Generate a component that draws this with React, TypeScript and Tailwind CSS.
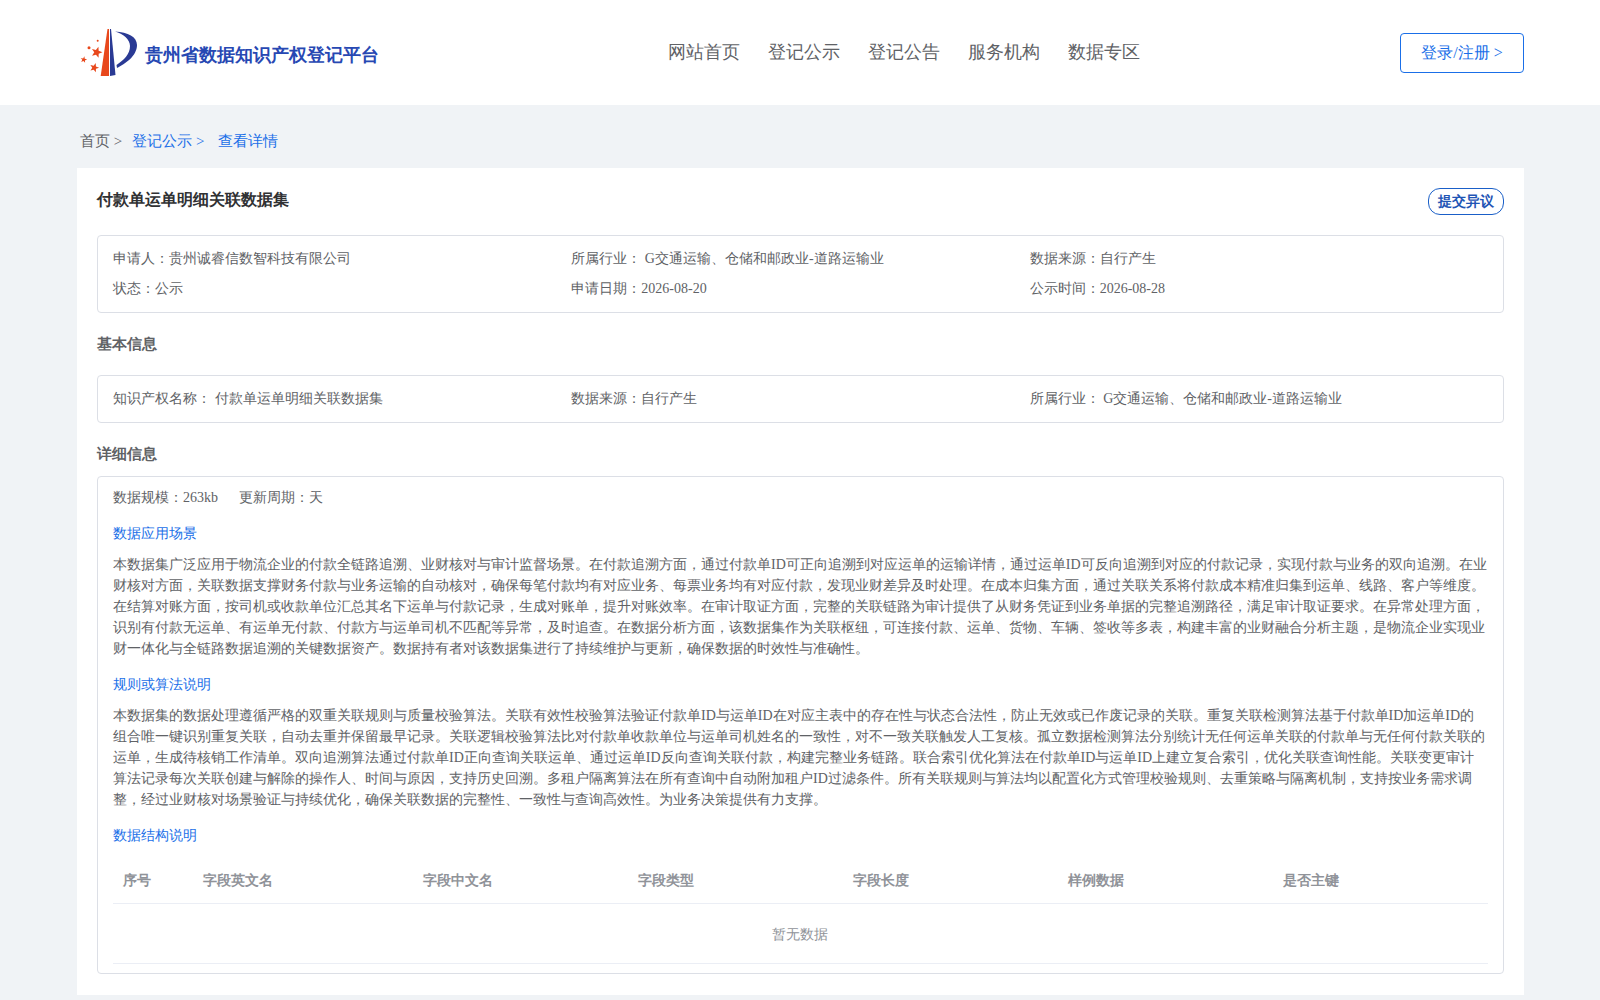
const navs = ["网站首页", "登记公示", "登记公告", "服务机构", "数据专区"];
const cols = ["序号", "字段英文名", "字段中文名", "字段类型", "字段长度", "样例数据", "是否主键"];

function star(cx: number, cy: number, r: number, rot = 0) {
  const pts: string[] = [];
  for (let i = 0; i < 10; i++) {
    const rad = i % 2 === 0 ? r : r * 0.42;
    const a = -Math.PI / 2 + (i * Math.PI) / 5 + rot;
    pts.push(`${(cx + rad * Math.cos(a)).toFixed(2)},${(cy + rad * Math.sin(a)).toFixed(2)}`);
  }
  return pts.join(" ");
}

function Logo() {
  return (
    <svg width="60" height="50" viewBox="0 0 60 50" className="shrink-0">
      <path d="M29.5 1 L31 1 L31 48 L22.7 48 Z" fill="#e8481c" />
      <path d="M32 1 L33 1 L37.5 47 L32 48 Z" fill="#2a3a94" />
      <path d="M37 3.5 C50 4 59 9 59 17 C59 28 47 36 39 40 L38.5 37 C46 32 52 26 52 18 C52 11 45 6 37 3.5 Z" fill="#2a3a94" />
      <polygon points={star(18.7, 24.3, 5.8, 0.3)} fill="#e8481c" />
      <polygon points={star(5.7, 31.7, 3.4, 0.2)} fill="#e8481c" />
      <polygon points={star(16.3, 39.7, 4.8, 0.3)} fill="#e8481c" />
      <circle cx="11" cy="19.7" r="1.5" fill="#e8481c" />
      <circle cx="19.7" cy="12.7" r="1" fill="#e8481c" />
    </svg>
  );
}

function Para({ children }: { children: React.ReactNode }) {
  return <p className="text-[14px] leading-[21px] text-[#606266]">{children}</p>;
}

export default function App() {
  return (
    <div className="min-h-[1000px] bg-[#f0f3f6] font-['Liberation_Serif',serif] text-[14px] text-[#606266]">
      <header className="flex h-[105px] items-center justify-between bg-white pl-[78px] pr-[76px]">
        <div className="flex w-[329px] items-center gap-[7px]">
          <Logo />
          <span className="mt-[6px] text-[18px] font-bold text-[#2748b3]">贵州省数据知识产权登记平台</span>
        </div>
        <nav className="flex gap-[28px] text-[18px] text-[#606266]">
          {navs.map((n) => (
            <span key={n}>{n}</span>
          ))}
        </nav>
        <button className="h-[40px] w-[124px] rounded-[4px] border border-[#1a6fe8] bg-white pt-[1px] text-[16px] text-[#1a6fe8]">
          登录/注册 &gt;
        </button>
      </header>

      <div className="flex h-[63px] items-center pl-[80px] pt-[10px] text-[15px] text-[#606266]">
        <span>首页 &gt;</span>
        <span className="ml-[10px] text-[#1a6fe8]">登记公示 &gt;</span>
        <span className="ml-[13.5px] text-[#1a6fe8]">查看详情</span>
      </div>

      <main className="ml-[77px] mr-[76px] h-[827px] bg-white px-[20px] pt-[20px]">
        <div className="flex h-[47px] items-start justify-between">
          <h1 className="text-[16px] leading-[24px] font-bold text-[#303133]">付款单运单明细关联数据集</h1>
          <button className="h-[27px] w-[76px] rounded-[12px] border border-[#1a5fc8] bg-white text-[14px] font-bold text-[#1f55b5]">
            提交异议
          </button>
        </div>

        <section className="grid h-[78px] grid-cols-3 content-center gap-y-[9px] rounded-[4px] border border-[#dcdfe6] px-[15px] pb-[2px] leading-[21px]">
          <span>申请人：贵州诚睿信数智科技有限公司</span>
          <span>所属行业： G交通运输、仓储和邮政业-道路运输业</span>
          <span>数据来源：自行产生</span>
          <span>状态：公示</span>
          <span>申请日期：2026-08-20</span>
          <span>公示时间：2026-08-28</span>
        </section>

        <h2 className="mt-[20px] mb-[20px] text-[15px] leading-[22px] font-bold text-[#606266]">基本信息</h2>

        <section className="grid h-[48px] grid-cols-3 items-center rounded-[4px] border border-[#dcdfe6] px-[15px] pb-[2px]">
          <span>知识产权名称： 付款单运单明细关联数据集</span>
          <span>数据来源：自行产生</span>
          <span>所属行业： G交通运输、仓储和邮政业-道路运输业</span>
        </section>

        <h2 className="mt-[20px] mb-[11px] text-[15px] leading-[22px] font-bold text-[#606266]">详细信息</h2>

        <section className="h-[498px] rounded-[4px] border border-[#dcdfe6] px-[15px] pt-[10px]">
          <div className="flex gap-[21px] leading-[21px]">
            <span>数据规模：263kb</span>
            <span>更新周期：天</span>
          </div>
          <h3 className="mt-[15px] mb-[10px] leading-[21px] text-[#1a6fe8]">数据应用场景</h3>
          <Para>
            本数据集广泛应用于物流企业的付款全链路追溯、业财核对与审计监督场景。在付款追溯方面，通过付款单ID可正向追溯到对应运单的运输详情，通过运单ID可反向追溯到对应的付款记录，实现付款与业务的双向追溯。在业财核对方面，关联数据支撑财务付款与业务运输的自动核对，确保每笔付款均有对应业务、每票业务均有对应付款，发现业财差异及时处理。在成本归集方面，通过关联关系将付款成本精准归集到运单、线路、客户等维度。在结算对账方面，按司机或收款单位汇总其名下运单与付款记录，生成对账单，提升对账效率。在审计取证方面，完整的关联链路为审计提供了从财务凭证到业务单据的完整追溯路径，满足审计取证要求。在异常处理方面，识别有付款无运单、有运单无付款、付款方与运单司机不匹配等异常，及时追查。在数据分析方面，该数据集作为关联枢纽，可连接付款、运单、货物、车辆、签收等多表，构建丰富的业财融合分析主题，是物流企业实现业财一体化与全链路数据追溯的关键数据资产。数据持有者对该数据集进行了持续维护与更新，确保数据的时效性与准确性。
          </Para>
          <h3 className="mt-[15px] mb-[10px] leading-[21px] text-[#1a6fe8]">规则或算法说明</h3>
          <Para>
            本数据集的数据处理遵循严格的双重关联规则与质量校验算法。关联有效性校验算法验证付款单ID与运单ID在对应主表中的存在性与状态合法性，防止无效或已作废记录的关联。重复关联检测算法基于付款单ID加运单ID的组合唯一键识别重复关联，自动去重并保留最早记录。关联逻辑校验算法比对付款单收款单位与运单司机姓名的一致性，对不一致关联触发人工复核。孤立数据检测算法分别统计无任何运单关联的付款单与无任何付款关联的运单，生成待核销工作清单。双向追溯算法通过付款单ID正向查询关联运单、通过运单ID反向查询关联付款，构建完整业务链路。联合索引优化算法在付款单ID与运单ID上建立复合索引，优化关联查询性能。关联变更审计算法记录每次关联创建与解除的操作人、时间与原因，支持历史回溯。多租户隔离算法在所有查询中自动附加租户ID过滤条件。所有关联规则与算法均以配置化方式管理校验规则、去重策略与隔离机制，支持按业务需求调整，经过业财核对场景验证与持续优化，确保关联数据的完整性、一致性与查询高效性。为业务决策提供有力支撑。
          </Para>
          <h3 className="mt-[15px] mb-[10px] leading-[21px] text-[#1a6fe8]">数据结构说明</h3>
          <div className="grid h-[48px] grid-cols-[80px_220px_repeat(5,1fr)] items-center border-b border-[#ebeef5] pt-[2px] font-bold text-[#909399]">
            {cols.map((c) => (
              <span key={c} className="px-[10px]">{c}</span>
            ))}
          </div>
          <div className="flex h-[60px] items-center justify-center border-b border-[#ebeef5] pt-[2px] pr-[2px] text-[#909399]">暂无数据</div>
        </section>
      </main>
    </div>
  );
}
